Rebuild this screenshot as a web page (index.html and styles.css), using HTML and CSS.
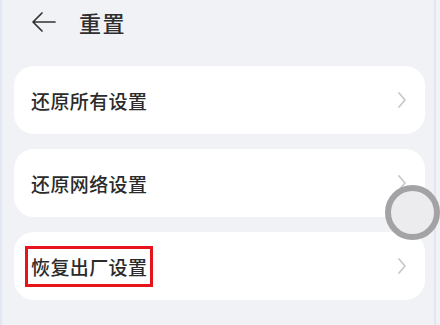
FILE: index.html
```html
<!DOCTYPE html>
<html lang="zh">
<head>
<meta charset="utf-8">
<link rel="stylesheet" href="styles.css">
</head>
<body>
<div class="screen">
  <header class="header">
    <svg class="back" width="26" height="22" viewBox="0 0 26 22"><path d="M24 11H3M11 2L2 11l9 9" fill="none" stroke="#333" stroke-width="1.7" stroke-linecap="round" stroke-linejoin="round"/></svg>
    <h1 class="title">重置</h1>
  </header>
  <div class="list">
    <div class="card"><span class="label">还原所有设置</span><svg class="chev" width="10" height="18" viewBox="0 0 10 18"><path d="M2 2l6 7-6 7" fill="none" stroke="#c9c9cc" stroke-width="1.8" stroke-linecap="round" stroke-linejoin="round"/></svg></div>
    <div class="card"><span class="label">还原网络设置</span><svg class="chev" width="10" height="18" viewBox="0 0 10 18"><path d="M2 2l6 7-6 7" fill="none" stroke="#c9c9cc" stroke-width="1.8" stroke-linecap="round" stroke-linejoin="round"/></svg></div>
    <div class="card"><span class="label">恢复出厂设置</span><svg class="chev" width="10" height="18" viewBox="0 0 10 18"><path d="M2 2l6 7-6 7" fill="none" stroke="#c9c9cc" stroke-width="1.8" stroke-linecap="round" stroke-linejoin="round"/></svg><span class="highlight"></span></div>
  </div>
  <div class="touch"></div>
</div>
</body>
</html>
```
FILE: styles.css
```css
html, body { margin: 0; padding: 0; }
body {
  width: 440px;
  height: 325px;
  overflow: hidden;
  background: #f1f2f6;
  font-family: "Noto Sans CJK SC", "Noto Sans", sans-serif;
  color: #222;
}
.screen {
  position: relative;
  height: 325px;
  box-sizing: border-box;
  border-left: 2px solid #dfe8f4;
  border-right: 4px solid #f1f2f6;
  box-shadow: inset -2px 0 0 #e3e6f2;
}
.header {
  display: flex;
  align-items: center;
  height: 46px;
  padding-left: 29px;
}
.back { display: block; margin-right: 22px; margin-top: -2px; }
.title {
  margin: 0;
  font-size: 22px;
  font-weight: 500;
  color: #2e2e2e;
  letter-spacing: 1.5px;
  margin-top: -3px;
}
.list {
  display: flex;
  flex-direction: column;
  gap: 15px;
  margin: 20px 11px 0 12px;
}
.card {
  position: relative;
  display: flex;
  align-items: center;
  justify-content: space-between;
  height: 68px;
  background: #fff;
  border-radius: 20px;
  padding: 0 18px 0 17px;
}
.label {
  font-size: 19px;
  font-weight: 500;
  color: #2b2b2b;
  letter-spacing: 0.4px;
}
.chev { display: block; }
.highlight {
  position: absolute;
  left: 11px;
  top: 14px;
  width: 122px;
  height: 35px;
  border: 3px solid #e8141b;
}
.touch {
  position: absolute;
  left: 383px;
  top: 185px;
  width: 43px;
  height: 43px;
  border-radius: 50%;
  border: 6px solid #a3a3a5;
  background: #ececef;
}
```
